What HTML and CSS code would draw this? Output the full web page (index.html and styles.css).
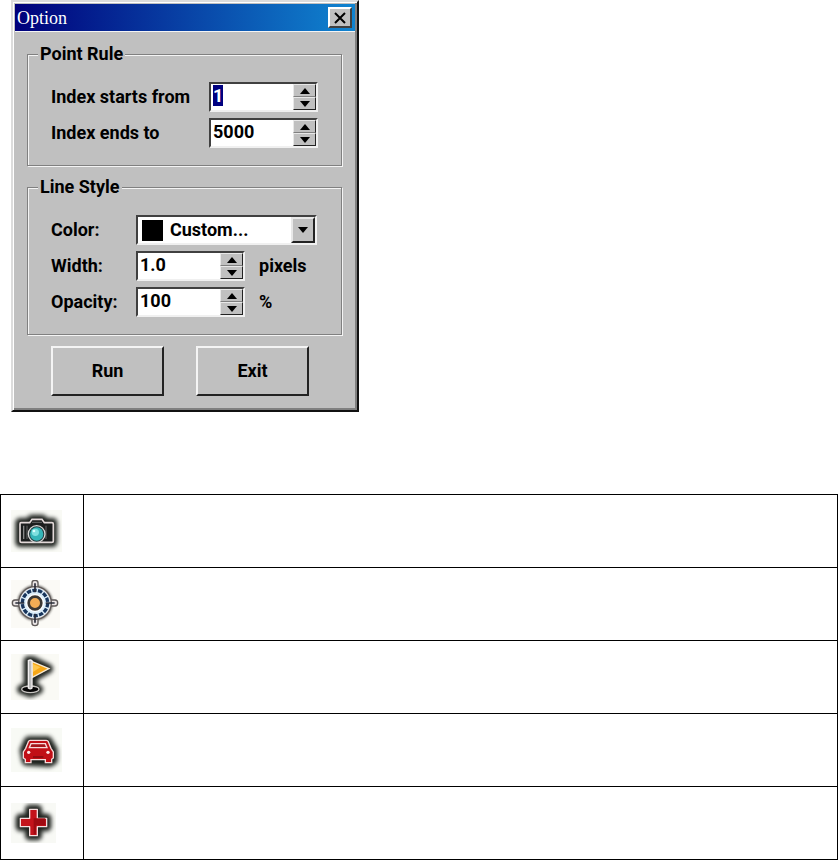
FILE: index.html
```html
<!DOCTYPE html>
<html lang="en">
<head>
    <meta charset="UTF-8">
    <meta name="viewport" content="width=device-width, initial-scale=1.0">
    <title>Option</title>
    <link rel="stylesheet" href="styles.css">
</head>
<body>
    <form class="window" onsubmit="return false">
        <header class="title-bar">
            <span>Option</span>
            <button type="button" class="close" aria-label="Close">
                <svg width="14" height="12" viewBox="0 0 14 12"><path d="M2 1l10 10M12 1L2 11" stroke="#000" stroke-width="2"/></svg>
            </button>
        </header>

        <div class="window-body">
            <fieldset class="points">
                <legend>Point Rule</legend>
                <div class="row">
                    <label for="indexStart">Index starts from</label>
                    <div class="spinner">
                        <input type="text" id="indexStart" value="1">
                        <div class="arrows">
                            <button type="button" class="up" aria-label="Increase start"></button>
                            <button type="button" class="down" aria-label="Decrease start"></button>
                        </div>
                    </div>
                </div>
                <div class="row">
                    <label for="indexEnd">Index ends to</label>
                    <div class="spinner">
                        <input type="text" id="indexEnd" value="5000">
                        <div class="arrows">
                            <button type="button" class="up" aria-label="Increase end"></button>
                            <button type="button" class="down" aria-label="Decrease end"></button>
                        </div>
                    </div>
                </div>
            </fieldset>

            <fieldset class="line">
                <legend>Line Style</legend>
                <div class="row">
                    <label for="lineColor">Color:</label>
                    <div class="combo">
                        <span class="swatch"></span>
                        <select id="lineColor">
                            <option>Custom...</option>
                        </select>
                        <span class="drop down"></span>
                    </div>
                </div>
                <div class="row">
                    <label for="lineWidth">Width:</label>
                    <div class="spinner">
                        <input type="text" id="lineWidth" value="1.0">
                        <div class="arrows">
                            <button type="button" class="up" aria-label="Increase width"></button>
                            <button type="button" class="down" aria-label="Decrease width"></button>
                        </div>
                    </div>
                    <span class="unit">pixels</span>
                </div>
                <div class="row">
                    <label for="lineOpacity">Opacity:</label>
                    <div class="spinner">
                        <input type="text" id="lineOpacity" value="100">
                        <div class="arrows">
                            <button type="button" class="up" aria-label="Increase opacity"></button>
                            <button type="button" class="down" aria-label="Decrease opacity"></button>
                        </div>
                    </div>
                    <span class="unit">%</span>
                </div>
            </fieldset>

            <div class="actions">
                <button type="button">Run</button>
                <button type="button">Exit</button>
            </div>
        </div>
    </form>

    <table class="icons">
        <tr>
            <td>
                <!-- camera -->
                <svg width="51" height="42" viewBox="0 0 153 126">
                    <rect width="153" height="126" fill="#f9faf5"/>
                    <path class="halo" d="M27 38h28l7-10h32l7 10h24v59H27z"/>
                    <path d="M30 38h26l7-10h30l7 10h23q4 0 4 4v50q0 5-5 5H32q-5 0-5-5V42q0-4 3-4z" fill="#1c1e1e" stroke="#e2d8d8" stroke-width="5"/>
                    <path d="M38 47v40" stroke="#888" stroke-width="4"/>
                    <path d="M48 47v40M105 47v40M63 37h30" stroke="#666" stroke-width="3"/>
                    <circle cx="77" cy="72" r="25" fill="#233d40" stroke="#d9d7d7" stroke-width="4"/>
                    <circle cx="77" cy="72" r="20" fill="#35b5b8"/>
                    <circle cx="73" cy="67" r="11" fill="#7fe0df"/>
                    <circle cx="69" cy="63" r="4" fill="#dcffff"/>
                </svg>
            </td>
            <td></td>
        </tr>
        <tr>
            <td>
                <!-- target -->
                <svg width="49" height="48" viewBox="0 0 147 144">
                    <rect width="147" height="144" fill="#fbfaf6"/>
                    <g class="halo-thin">
                        <circle cx="72" cy="69" r="47"/>
                        <path d="M72 5v128M8 69h128"/>
                    </g>
                    <g fill="#e9e4e4" stroke="#5f5a59" stroke-width="4">
                        <path d="M58 26l5-6V8q0-7 9-7t9 7v12l5 6zM58 112l5 6v12q0 7 9 7t9-7v-12l5-6zM29 55l-6 5H12q-8 0-8 9t8 9h11l6 5zM115 55l6 5h11q8 0 8 9t-8 9h-11l-6 5z"/>
                        <circle cx="72" cy="69" r="49"/>
                    </g>
                    <circle cx="72" cy="69" r="36" fill="#fff" stroke="#dceefa" stroke-width="18"/>
                    <circle cx="72" cy="69" r="38" fill="none" stroke="#17345b" stroke-width="10" stroke-dasharray="13 4"/>
                    <path d="M72 10v27M72 101v27M13 69h27M104 69h27" stroke="#292c39" stroke-width="5"/>
                    <circle cx="72" cy="69" r="19" fill="#f3ad55" stroke="#3b3834" stroke-width="8"/>
                </svg>
            </td>
            <td></td>
        </tr>
        <tr>
            <td>
                <!-- flag -->
                <svg width="48" height="46" viewBox="0 0 144 138">
                    <rect width="144" height="138" fill="#fafaf5"/>
                    <path class="halo" d="M52 20h12l48 24-46 26v28l16 8-24 10-26-10 20-8z"/>
                    <ellipse cx="58" cy="106" rx="26" ry="10" fill="#050505" stroke="#c9c6c3" stroke-width="4"/>
                    <path d="M62 22l52 22-50 26z" fill="#f6a716" stroke="#f7e9d2" stroke-width="4"/>
                    <path d="M66 30l22 10-22 14z" fill="#ffc74c"/>
                    <path d="M52 20q6-4 11 0v82q-5 5-11 0z" fill="#bdbdbd" stroke="#f1eeee" stroke-width="4"/>
                </svg>
            </td>
            <td></td>
        </tr>
        <tr>
            <td>
                <!-- car -->
                <svg width="51" height="44" viewBox="0 0 153 132">
                    <rect width="153" height="132" fill="#f8faf5"/>
                    <path class="halo" d="M53 39h57l16 28v30l-10 6-70-4-6-32z"/>
                    <path d="M57 37h49q4 0 6 4l8 20 7 11v18l-5 4v10h-19v-9H60v9H43V94l-6-4V72l7-11 8-20q2-4 5-4z" fill="#c10f16" stroke="#f6dada" stroke-width="4"/>
                    <path d="M60 47h43l5 12H55z" fill="#a5151a" stroke="#f6dada" stroke-width="4"/>
                    <path d="M66 87h31" stroke="#920b10" stroke-width="6"/>
                    <circle cx="53" cy="73" r="5" fill="#fde8e8"/>
                    <circle cx="111" cy="73" r="5" fill="#fde8e8"/>
                </svg>
            </td>
            <td></td>
        </tr>
        <tr>
            <td>
                <!-- cross -->
                <svg width="45" height="40" viewBox="0 0 135 120">
                    <rect width="135" height="120" fill="#f8f9f5"/>
                    <path class="halo" d="M56 19h23v27h28v25H79v27H56V71H28V46h28z"/>
                    <path d="M56 19h23v27h28v25H79v27H56V71H28V46h28z" fill="#c4131b" stroke="#f5dede" stroke-width="4" stroke-linejoin="round"/>
                    <path d="M68 46h35v21H75v27h-7z" fill="#9f0b12"/>
                </svg>
            </td>
            <td></td>
        </tr>
    </table>

    <script>
        // start with the first field selected
        const firstField = document.getElementById('indexStart');
        firstField.focus();
        firstField.select();
    </script>
</body>
</html>
```
FILE: styles.css
```css
* {
    box-sizing: border-box;
}

body {
    margin: 0;
    background-color: #fff;
    color: #000;
    font-family: 'Roboto', 'Liberation Sans', sans-serif;
    font-size: 18px;
    font-weight: bold;
    line-height: 20px;
}

button,
input,
select {
    margin: 0;
    font: inherit;
    color: inherit;
}

.window {
    width: 348px;
    margin: 0 0 82px 11px;
    padding: 2px;
    background-color: #c0c0c0;
    border: 2px solid;
    border-color: #dcdcdc #111 #111 #dcdcdc;
    box-shadow: inset 1px 1px #fff, inset -2px -2px #808080;
}

.title-bar {
    display: flex;
    justify-content: space-between;
    align-items: center;
    height: 27px;
    padding: 0 3px 0 2px;
    background: linear-gradient(to right, #00007b, #1084d0);
    color: #fff;
    font-family: 'Liberation Serif', serif;
    font-size: 18px;
    font-weight: normal;
}

.close {
    display: flex;
    align-items: center;
    justify-content: center;
    width: 24px;
    height: 21px;
    padding: 0;
    background-color: #c0c0c0;
    border: 2px solid;
    border-color: #fff #404040 #404040 #fff;
}

.window-body {
    padding: 12px;
    border-top: 1px solid #f4f4f4;
}

fieldset {
    display: flex;
    flex-direction: column;
    gap: 6px;
    margin: 0 1px 11px 0;
    padding: 18px 23px 17px;
    border: 1px solid #808080;
    box-shadow: 1px 1px #f4f4f4, inset 1px 1px #f4f4f4;
}

legend {
    margin-left: -13px;
    padding: 0 2px;
    background-color: #c0c0c0;
}

.row {
    display: flex;
    align-items: center;
}

.points label {
    width: 158px;
}

.line label {
    width: 85px;
}

.spinner,
.combo {
    display: flex;
    height: 30px;
    background-color: #fff;
    border: 2px solid;
    border-color: #404040 #f0f0f0 #f0f0f0 #404040;
}

.spinner {
    width: 109px;
}

.spinner input {
    flex: 1;
    min-width: 0;
    height: 23px;
    padding: 0 2px;
    background: none;
    border: none;
    outline: none;
}

.spinner input::selection {
    background-color: #000080;
    color: #fff;
}

.arrows {
    display: flex;
    flex-direction: column;
    width: 23px;
}

.arrows button,
.drop {
    display: flex;
    align-items: center;
    justify-content: center;
    flex: 1;
    padding: 0;
    background-color: #c0c0c0;
    border: 1px solid;
    border-color: #e8e8e8 #222 #222 #e8e8e8;
}

.arrows .up {
    border-bottom-color: #808080;
}

.up::before,
.down::before {
    content: '';
    border: 5px solid transparent;
}

.up::before {
    border-top: none;
    border-bottom: 6px solid #000;
}

.down::before {
    border-bottom: none;
    border-top: 6px solid #000;
}

.combo {
    position: relative;
    width: 181px;
}

.combo select {
    flex: 1;
    padding: 0 0 0 32px;
    background: none;
    border: none;
    outline: none;
    appearance: none;
}

.swatch {
    position: absolute;
    top: 3px;
    left: 4px;
    width: 21px;
    height: 21px;
    background-color: #000;
}

.drop {
    position: absolute;
    top: 0;
    right: 0;
    bottom: 0;
    width: 24px;
    border-width: 2px;
    pointer-events: none;
}

.unit {
    margin-left: 14px;
}

.actions {
    display: flex;
    gap: 32px;
    padding: 0 34px 0 24px;
}

.actions button {
    flex: 1;
    height: 50px;
    background-color: #c0c0c0;
    border: 2px solid;
    border-color: #f4f4f4 #222 #222 #f4f4f4;
}

.icons {
    width: 100%;
    border-collapse: collapse;
}

.icons td {
    height: 73px;
    padding: 0 10px;
    border: 1px solid #000;
}

.icons td:first-child {
    width: 83px;
}

.icons svg {
    display: block;
}

.halo {
    fill: #1d211d;
    stroke: #1d211d;
    stroke-width: 28px;
    stroke-linejoin: round;
    filter: blur(7px);
}

.halo-thin {
    fill: #6b6863;
    stroke: #6b6863;
    stroke-width: 12px;
    filter: blur(3px);
}
```
